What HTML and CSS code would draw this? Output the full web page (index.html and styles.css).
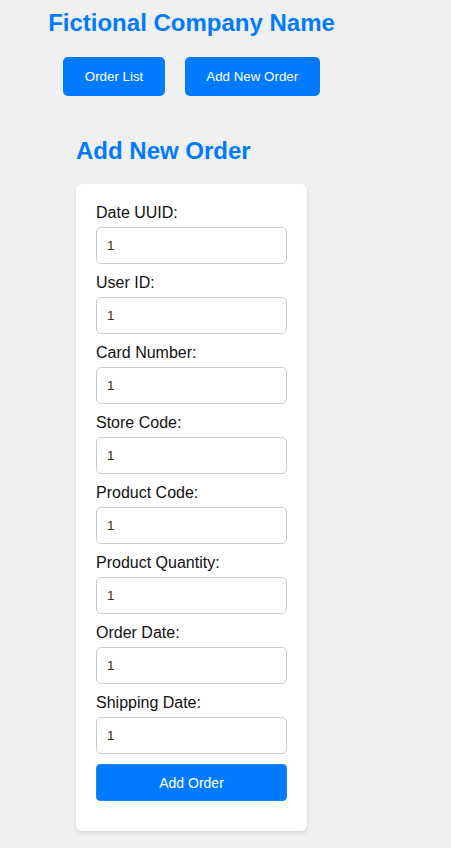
FILE: index.html
```html
<!DOCTYPE html>
<html>
<head>
<meta charset="utf-8">
<link rel="stylesheet" href="styles.css">
</head>
<body>
<div class="app">
  <header class="header">
    <h1 class="brand">Fictional Company Name</h1>
    <nav class="nav">
      <button class="nav-btn">Order List</button>
      <button class="nav-btn">Add New Order</button>
    </nav>
  </header>
  <section class="section">
    <h2 class="section-title">Add New Order</h2>
    <form class="card">
      <label class="field-label">Date UUID:</label>
      <input class="field-input" type="text" value="1">
      <label class="field-label">User ID:</label>
      <input class="field-input" type="text" value="1">
      <label class="field-label">Card Number:</label>
      <input class="field-input" type="text" value="1">
      <label class="field-label">Store Code:</label>
      <input class="field-input" type="text" value="1">
      <label class="field-label">Product Code:</label>
      <input class="field-input" type="text" value="1">
      <label class="field-label">Product Quantity:</label>
      <input class="field-input" type="text" value="1">
      <label class="field-label">Order Date:</label>
      <input class="field-input" type="text" value="1">
      <label class="field-label">Shipping Date:</label>
      <input class="field-input" type="text" value="1">
      <button class="submit-btn" type="button">Add Order</button>
    </form>
  </section>
</div>
</body>
</html>
```
FILE: styles.css
```css
html, body {
  margin: 0;
  padding: 0;
  background: #f0f0f0;
  font-family: "Liberation Sans", Arial, sans-serif;
}
body {
  padding: 9px 8px 8px;
}
.app {
  width: 367px;
  display: flex;
  flex-direction: column;
  align-items: center;
}
.header {
  display: flex;
  flex-direction: column;
  align-items: center;
}
.brand {
  margin: 0;
  font-size: 24px;
  font-weight: bold;
  color: #007bff;
  line-height: 28px;
}
.nav {
  display: flex;
  gap: 20px;
  margin-top: 20px;
}
.nav-btn {
  font-family: "Liberation Sans", Arial, sans-serif;
  font-size: 13.333px;
  line-height: 15px;
  padding: 10px 19.5px;
  border: 2px solid #007bff;
  background: #007bff;
  color: #fff;
  border-radius: 5px;
}
.section {
  margin-top: 41px;
  width: 231px;
}
.section-title {
  margin: 0 0 19px;
  font-size: 24px;
  line-height: 28px;
  font-weight: bold;
  color: #007bff;
}
.card {
  background: #fff;
  border-radius: 6px;
  box-shadow: 0 2px 4px rgba(0,0,0,0.12);
  padding: 20px 20px 30px;
  display: flex;
  flex-direction: column;
}
.field-label {
  font-size: 16px;
  line-height: 18px;
  color: #111;
  margin-bottom: 5px;
}
.field-input {
  box-sizing: border-box;
  width: 191px;
  height: 37px;
  margin: 0 0 10px;
  padding: 0 10px;
  border: 1px solid #ccc;
  border-radius: 5px;
  font-family: "Liberation Sans", Arial, sans-serif;
  font-size: 13.333px;
  color: #3a2a10;
  background: #fff;
}
.submit-btn {
  box-sizing: border-box;
  width: 191px;
  height: 37px;
  border: 1px solid #1a86f0;
  border-radius: 4px;
  background: #007bff;
  color: #fff;
  font-family: "Liberation Sans", Arial, sans-serif;
  font-size: 14px;
}
```
